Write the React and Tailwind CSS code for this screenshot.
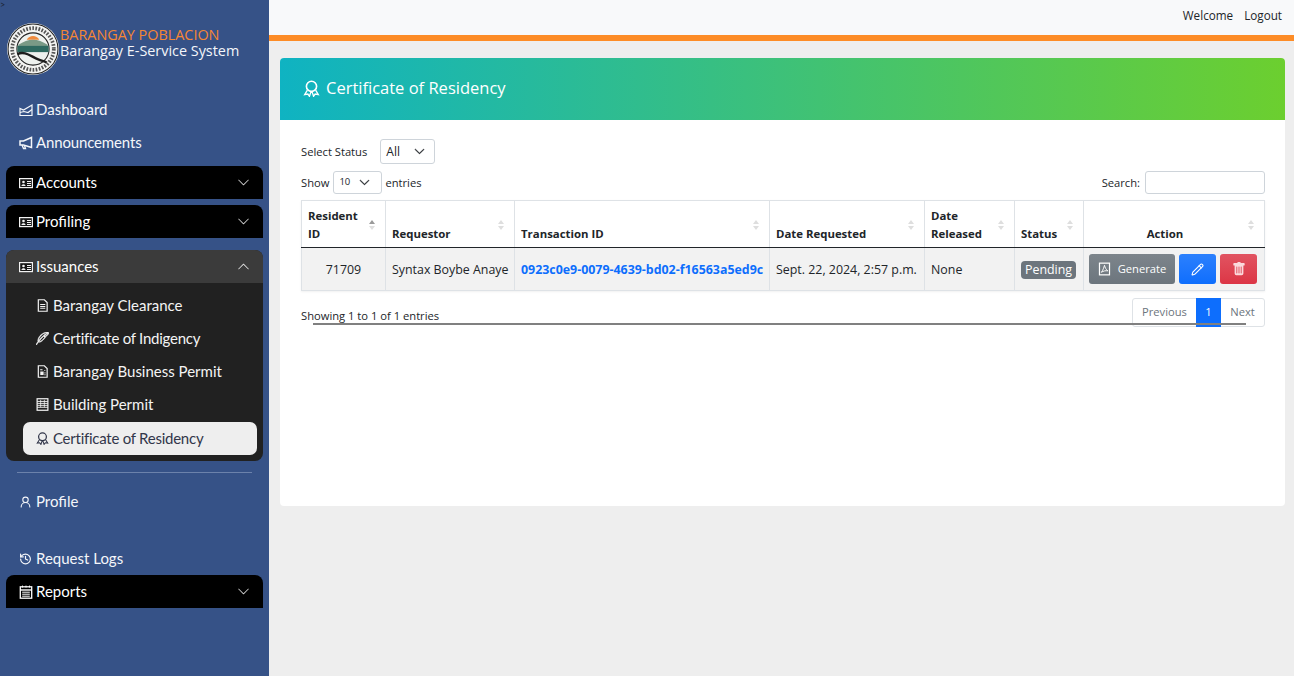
import React from "react";
import { BsChevronDown, BsChevronUp, BsFeather, BsTrashFill } from "react-icons/bs";
import { LuUserRound, LuHistory, LuPencil } from "react-icons/lu";

const navFont = "[font-family:'Lato','Noto_Sans',sans-serif]";

function Svg({ w = 14, h = 14, className = "", children }) {
  return (
    <svg width={w} height={h} viewBox="0 0 14 14" fill="none" stroke="currentColor" strokeWidth="1.2" className={`shrink-0 ${className}`}>
      {children}
    </svg>
  );
}

const DashIcon = (p) => (
  <Svg {...p}>
    <path d="M1 12.5 V5.5 L4.5 7 L13 2 V12.5 Z" />
    <path d="M1 9.5 L5 8.5 L9 9.5 L13 6.5" />
  </Svg>
);
const MegaIcon = (p) => (
  <Svg {...p} className="">
    <path d="M1 5 H4.5 L12.5 1.5 V11.5 L4.5 9 H1 Z" strokeWidth="1.5" />
    <path d="M3 9 L4.5 12.5 H6.5 L5.5 9.5" strokeWidth="1.3" />
  </Svg>
);
const CardIcon = (p) => (
  <Svg {...p}>
    <rect x="0.6" y="2.6" width="12.8" height="9" stroke="#f2f2f2" strokeWidth="1.2" fill="#171717" />
    <circle cx="4.5" cy="6" r="1.3" fill="#f2f2f2" stroke="none" />
    <path d="M2.4 10 C2.6 7.6 6.4 7.6 6.6 10 Z" fill="#f2f2f2" stroke="none" />
    <path d="M8 5.5 H12 M8 7.5 H12 M8 9.5 H12" stroke="#f2f2f2" strokeWidth="1" />
  </Svg>
);
const DocIcon = (p) => (
  <Svg {...p}>
    <path d="M2.5 0.8 H9 L12 3.8 V13.2 H2.5 Z" strokeWidth="1.3" />
    <path d="M4.5 6 H10 M4.5 8 H10 M4.5 10 H10" strokeWidth="1.1" />
  </Svg>
);
const BizIcon = (p) => (
  <Svg {...p}>
    <path d="M2.5 0.8 H9 L12 3.8 V13.2 H2.5 Z" strokeWidth="1.3" />
    <path d="M4.5 5 H7 M9 6 H10" strokeWidth="1.1" />
    <rect x="4.6" y="7" width="3.6" height="3.8" fill="currentColor" stroke="none" />
    <path d="M9 8.5 H10.3 M9 10.5 H10.3" strokeWidth="1" />
  </Svg>
);
const BuildingIcon = (p) => (
  <Svg {...p}>
    <rect x="1.2" y="0.8" width="11.6" height="12.4" strokeWidth="1.3" />
    <path d="M1.2 3.7 H12.8 M1.2 5.8 H12.8 M1.2 7.9 H12.8 M1.2 10 H12.8" strokeWidth="1" />
    <path d="M5 2 V10 M9 2 V10" strokeWidth="0.8" />
  </Svg>
);
const AwardIcon = (p) => (
  <Svg {...p}>
    <circle cx="7" cy="5.2" r="4.2" strokeWidth="1.35" />
    <path d="M3.6 8.3 L1.4 12 L4 11.6 L5.3 13.4 L6.6 9.6 M10.4 8.3 L12.6 12 L10 11.6 L8.7 13.4 L7.4 9.6" strokeWidth="1.1" />
  </Svg>
);
const ReportIcon = (p) => (
  <Svg {...p}>
    <rect x="1.3" y="1.8" width="11.4" height="11.4" strokeWidth="1.3" />
    <path d="M3.5 0.6 V2.5 M7 0.6 V2.5 M10.5 0.6 V2.5" strokeWidth="1" />
    <path d="M1.3 5 H12.7" strokeWidth="1.4" />
    <path d="M3.2 7.2 H10.8 M3.2 9.2 H10.8 M3.2 11.2 H10.8" strokeWidth="1" />
  </Svg>
);
const PdfIcon = (p) => (
  <Svg {...p}>
    <rect x="1.6" y="0.7" width="10.8" height="12.6" strokeWidth="1.3" />
    <path d="M7 3 C6.2 5.5 5.6 8 3.6 10.6 C6 9 8 8.6 10.6 9 C8.6 7.6 7.6 5.5 7 3 Z" strokeWidth="1" />
  </Svg>
);

function Logo() {
  return (
    <svg width="52" height="52" viewBox="0 0 50 50" className="shrink-0">
      <circle cx="25" cy="25" r="25" fill="#f4f4f2" />
      <circle cx="25" cy="25" r="24" fill="none" stroke="#222" strokeWidth="1" />
      <circle cx="25" cy="25" r="15.5" fill="#eef1ee" stroke="#222" strokeWidth="1" />
      <circle cx="25" cy="25" r="20" fill="none" stroke="#555" strokeWidth="3.6" strokeDasharray="1.6 1.4" />
      <path d="M19 16 a7 7 0 0 1 12 0z" fill="#f08a3c" />
      <path d="M11 21 Q25 11 39 21 L40 27 H10z" fill="#7a9a86" />
      <path d="M10 22 H40 V28 H10z" fill="#2f6a60" />
      <path d="M10 30 C17 26 24 33 30 35 C34 36.5 37 37 38 38" fill="none" stroke="#1c1c1c" strokeWidth="2.4" />
    </svg>
  );
}

function NavLink({ icon: Icon, label, className = "", textClass = "" }) {
  return (
    <div className={`flex h-[33px] items-center pl-[19px] text-[#f4f6fa] ${className}`}>
      <span className="mr-[4px] flex w-[13px] justify-center"><Icon /></span>
      <span className={textClass}>{label}</span>
    </div>
  );
}

function Group({ label, icon: Icon = CardIcon, className = "" }) {
  return (
    <div className={`mx-[6px] flex h-[33px] items-center justify-between rounded-t-[8px] bg-black pl-[13px] pr-[13px] text-white ${className}`}>
      <div className="flex items-center">
        <span className="mr-[4px] flex w-[13px] justify-center"><Icon /></span>
        <span>{label}</span>
      </div>
      <BsChevronDown className="h-[13px] w-[13px] text-[#d5d5d5]" />
    </div>
  );
}

function SubItem({ icon: Icon, label, active, textClass = "", className = "" }) {
  return (
    <div className={`flex h-[33px] items-center rounded-[7px] pl-[13px] ${active ? "bg-[#eeeeee] text-[#32364a]" : "text-[#f4f4f4]"} ${className}`}>
      <span className="mr-[4px] flex w-[13px] justify-center"><Icon w={13} h={13} /></span>
      <span className={textClass}>{label}</span>
    </div>
  );
}

function Sorter({ active }) {
  return (
    <span className="absolute right-[10px] top-[19px] flex flex-col gap-[2px]">
      <span className={`h-0 w-0 border-x-[3px] border-b-[4px] border-x-transparent ${active ? "border-b-[#9a9a9a]" : "border-b-[#dedede]"}`} />
      <span className="h-0 w-0 border-x-[3px] border-t-[4px] border-x-transparent border-t-[#dedede]" />
    </span>
  );
}

const headers = [
  ["Resident ID", "w-[84px]", true, "Resident", "ID"],
  ["Requestor", "w-[129px]"],
  ["Transaction ID", "w-[255px]"],
  ["Date Requested", "w-[155px]"],
  ["Date Released", "w-[90px]", false, "Date", "Released"],
  ["Status", "w-[69px]"],
  ["Action", "w-[181px]"],
];

const td = "border border-[#dee2e6] px-[6px] pt-[2px] whitespace-nowrap";

export default function App() {
  return (
    <div className="flex h-[676px] w-[1294px] overflow-hidden bg-[#eeeeee] [font-family:'Open_Sans','Noto_Sans',sans-serif]">
      <aside className={`relative h-full w-[269px] shrink-0 bg-[#365287] text-[15px] ${navFont}`}>
        <span className="absolute left-0 top-0 text-[9px] leading-[10px] text-[#1c2433]">&gt;</span>
        <div className="flex items-center pl-[7px] pt-[23px]">
          <Logo />
          <div className="ml-[1px] -mt-[13px] text-[14.4px] leading-[16px] [font-family:'Open_Sans',sans-serif]">
            <div className="text-[#f58634]">BARANGAY POBLACION</div>
            <div className="text-[#f4f6fa]">Barangay E-Service System</div>
          </div>
        </div>

        <div className="pt-[18px]">
          <NavLink icon={DashIcon} label="Dashboard" />
          <NavLink icon={MegaIcon} label="Announcements" textClass="tracking-[-0.15px]" />
        </div>
        <Group label="Accounts" className="mt-[7px]" />
        <Group label="Profiling" className="mt-[6px]" />

        <div className="mx-[6px] mt-[12px] overflow-hidden rounded-[8px] bg-[#212121] text-white">
          <div className="flex h-[33px] items-center justify-between bg-[#3b3b3b] px-[13px]">
            <div className="flex items-center">
              <span className="mr-[4px] flex w-[13px] justify-center"><CardIcon /></span>
              <span>Issuances</span>
            </div>
            <BsChevronUp className="h-[13px] w-[13px] text-[#e5e5e5]" />
          </div>
          <div className="pb-[6px] pl-[17px] pr-[6px] pt-[6px]">
            <SubItem icon={DocIcon} label="Barangay Clearance" />
            <SubItem icon={() => <BsFeather className="h-[13px] w-[13px] stroke-[0.5]" />} label="Certificate of Indigency" textClass="tracking-[-0.25px]" />
            <SubItem icon={BizIcon} label="Barangay Business Permit" />
            <SubItem icon={BuildingIcon} label="Building Permit" />
            <SubItem icon={AwardIcon} label="Certificate of Residency" active textClass="tracking-[-0.25px]" className="mt-[1px]" />
          </div>
        </div>

        <div className="mx-[17px] mt-[11px] h-px bg-[#6c82ab]" />
        <NavLink icon={() => <LuUserRound className="h-[14px] w-[14px]" strokeWidth={2} />} label="Profile" className="mt-[12px]" />
        <NavLink icon={() => <LuHistory className="h-[14px] w-[14px]" strokeWidth={2.2} />} label="Request Logs" className="mt-[24px]" />
        <Group label="Reports" icon={ReportIcon} />
      </aside>

      <div className="flex min-w-0 flex-1 flex-col">
        <header className="flex h-[41px] shrink-0 items-start justify-end gap-[11px] border-b-[6px] border-[#fd8c26] bg-[#f8f9fa] pr-[12px] pt-[6px] text-[11.7px] leading-[18px] text-[#212529]">
          <span>Welcome</span>
          <span>Logout</span>
        </header>

        <main className="ml-[11px] mr-[9px] mt-[17px] h-[448px] overflow-hidden rounded-[4px] bg-white">
          <div className="flex h-[62px] items-center bg-linear-to-r/srgb from-[#0fb3c2] to-[#6ccf2f] pb-[2px] pl-[23px] text-[16.5px] text-white">
            <AwardIcon w={17} h={17} className="mr-[6px]" />
            <span>Certificate of Residency</span>
          </div>

          <div className="relative pl-[21px] pr-[20px] pt-[19px] text-[11.2px] text-[#212529]">
            <div className="flex h-[25px] items-center">
              <span className="mr-[13px] pt-[2px]">Select Status</span>
              <div className="flex h-[25px] w-[55px] items-center justify-between rounded-[3px] border border-[#ced4da] pl-[5px] pr-[9px] text-[12px] text-[#212529]">
                <span>All</span>
                <BsChevronDown className="h-[11px] w-[11px] stroke-[0.7]" />
              </div>
            </div>

            <div className="mt-[7px] flex h-[23px] items-center justify-between">
              <div className="flex items-center">
                <span className="pt-[2px]">Show</span>
                <div className="mx-[3px] ml-[4px] flex h-[23px] w-[49px] items-center justify-between rounded-[3px] border border-[#ced4da] pl-[5px] pr-[11px] text-[9.5px]">
                  <span>10</span>
                  <BsChevronDown className="h-[11px] w-[11px] stroke-[0.7]" />
                </div>
                <span className="pt-[2px]">entries</span>
              </div>
              <div className="flex items-center">
                <span className="mr-[5px] pt-[2px]">Search:</span>
                <div className="h-[23px] w-[120px] rounded-[3px] border border-[#ced4da]" />
              </div>
            </div>

            <table className="mt-[6px] w-[963px] table-fixed border-collapse border-b border-[#dee2e6] shadow-[0_1px_2px_rgba(0,0,0,0.06)]">
              <thead>
                <tr className="h-[47px]">
                  {headers.map(([label, w, active, a, b]) => (
                    <th key={label} className={`relative border border-b-[1.5px] border-[#dee2e6] border-b-[#212529] pb-[4px] pl-[6px] align-bottom text-[11.4px] font-bold leading-[18px] ${w} ${label === "Action" ? "pr-[24px] text-center" : "pr-[6px] text-left"}`}>
                      {a ? <>{a}<br />{b}</> : label}
                      <Sorter active={active} />
                    </th>
                  ))}
                </tr>
              </thead>
              <tbody className="text-[12.4px]">
                <tr className="h-[43px] bg-[#f2f2f2]">
                  <td className={`${td} text-center`}>71709</td>
                  <td className={td}>Syntax Boybe Anaye</td>
                  <td className={`${td} font-bold text-[#0d6efd]`}>0923c0e9-0079-4639-bd02-f16563a5ed9c</td>
                  <td className={td}>Sept. 22, 2024, 2:57 p.m.</td>
                  <td className={td}>None</td>
                  <td className={td}>
                    <span className="inline-block h-[18px] rounded-[4px] bg-[#6c757d] px-[4px] leading-[18px] text-white">Pending</span>
                  </td>
                  <td className="border border-[#dee2e6] px-[5px]">
                    <div className="flex gap-[4px]">
                      <div className="flex h-[30px] w-[86px] items-center justify-center rounded-[3px] bg-gradient-to-b from-[#7d858c] to-[#6c757d] text-[11.2px] text-white">
                        <PdfIcon w={13} h={14} className="mr-[7px]" />
                        Generate
                      </div>
                      <div className="flex h-[30px] w-[37px] items-center justify-center rounded-[3px] bg-gradient-to-b from-[#2b80fd] to-[#0d6efd] text-white">
                        <LuPencil className="h-[13px] w-[13px]" strokeWidth={2} />
                      </div>
                      <div className="flex h-[30px] w-[37px] items-center justify-center rounded-[3px] bg-gradient-to-b from-[#e15361] to-[#dc3545] text-[#fbd9dc]">
                        <BsTrashFill className="h-[14px] w-[14px]" />
                      </div>
                    </div>
                  </td>
                </tr>
              </tbody>
            </table>

            <div className="mt-[7px] flex items-start justify-between">
              <span className="pt-[9px] leading-[18px]">Showing 1 to 1 of 1 entries</span>
              <div className="flex h-[29px] w-[133px] items-center rounded-[3px] border border-[#dee2e6] text-[#6c757d]">
                <span className="w-[63px] text-center">Previous</span>
                <span className="-my-px flex h-[29px] w-[25px] items-center justify-center bg-[#0d6efd] text-white">1</span>
                <span className="flex-1 text-center">Next</span>
              </div>
            </div>
            <div className="absolute left-[33px] top-[203px] h-[2px] w-[933px] bg-[#808080]" />
          </div>
        </main>
      </div>
    </div>
  );
}
